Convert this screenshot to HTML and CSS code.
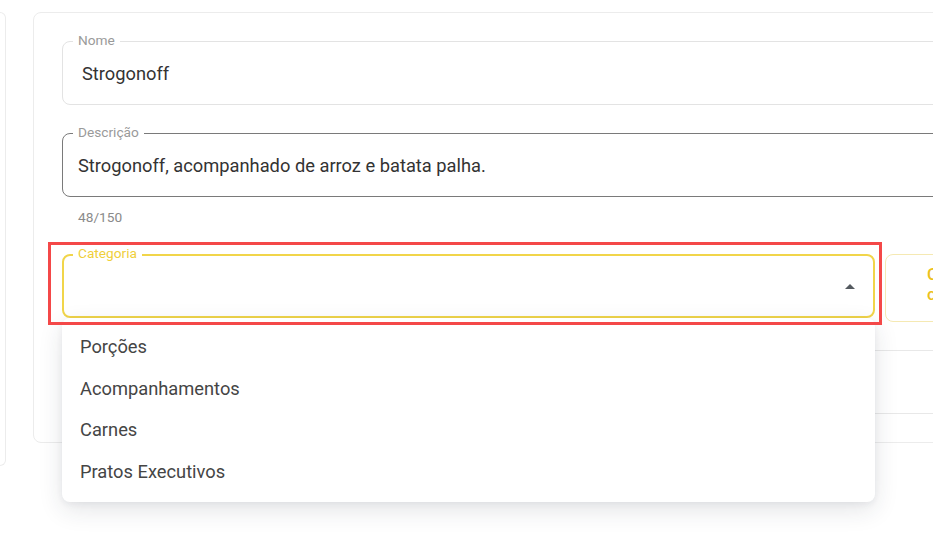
FILE: index.html
```html
<!DOCTYPE html>
<html lang="pt-BR">
<head>
<meta charset="utf-8">
<title>Produto</title>
<link rel="stylesheet" href="styles.css">
</head>
<body>
<div class="page">
  <aside class="side"></aside>
  <main class="card">
    <div class="field field-name">
      <span class="label">Nome</span>
      <span class="value">Strogonoff</span>
    </div>
    <div class="field field-desc">
      <span class="label">Descrição</span>
      <span class="value">Strogonoff, acompanhado de arroz e batata palha.</span>
    </div>
    <div class="counter">48/150</div>
    <div class="cat-row">
      <div class="select">
        <span class="label label-cat">Categoria</span>
        <span class="arrow"></span>
        <div class="highlight"></div>
        <ul class="menu">
          <li>Porções</li>
          <li>Acompanhamentos</li>
          <li>Carnes</li>
          <li>Pratos Executivos</li>
        </ul>
      </div>
      <button class="add-btn">Criar categoria</button>
    </div>
    <div class="field field-price"></div>
  </main>
</div>
</body>
</html>
```

FILE: styles.css
```css
* { box-sizing: border-box; }
html, body {
  margin: 0;
  width: 933px;
  height: 544px;
  overflow: hidden;
  background: #ffffff;
  font-family: Roboto, "Noto Sans", sans-serif;
}
.page {
  display: flex;
  align-items: flex-start;
  gap: 27px;
  padding-top: 12px;
}
.side {
  flex: none;
  width: 6px;
  height: 454px;
  border: 1px solid #ececec;
  border-left: none;
  border-radius: 0 8px 8px 0;
}
.card {
  flex: none;
  width: 1000px;
  border: 1px solid #ececec;
  border-radius: 8px;
  padding: 28px 28px 28px 28px;
  display: flex;
  flex-direction: column;
}
.field {
  position: relative;
  height: 64px;
  border: 1px solid #e3e3e3;
  border-radius: 8px;
  display: flex;
  align-items: center;
}
.label {
  position: absolute;
  top: -11px;
  left: 10px;
  padding: 0 5px;
  background: #fff;
  font-size: 13.7px;
  line-height: 18px;
  color: #9a9a9a;
}
.value {
  font-size: 18.3px;
  color: #333;
}
.field-name .value { padding-left: 19px; }
.field-desc {
  margin-top: 28px;
  border-color: #7a7a7a;
}
.field-desc .value { padding-left: 15px; }
.counter {
  margin-top: 11px;
  padding-left: 16px;
  font-size: 13.7px;
  line-height: 18px;
  color: #8a8a8a;
}
.cat-row {
  margin-top: 28px;
  display: flex;
  align-items: flex-start;
  gap: 10px;
}
.select {
  position: relative;
  flex: none;
  width: 813px;
  height: 64px;
  border: 2px solid #f1d54a;
  border-radius: 8px;
  z-index: 2;
}
.label-cat {
  top: -12px;
  left: 9px;
  color: #efcf3a;
}
.arrow {
  position: absolute;
  top: 28px;
  right: 18px;
  width: 0;
  height: 0;
  border-left: 5px solid transparent;
  border-right: 5px solid transparent;
  border-bottom: 5px solid #555a60;
}
.highlight {
  position: absolute;
  left: -16px;
  top: -14px;
  width: 834px;
  height: 83px;
  border: 3px solid #f44848;
  z-index: 3;
}
.menu {
  position: absolute;
  top: calc(100% + 2px);
  left: -2px;
  width: 813px;
  margin: 0;
  padding: 8px 0 10px;
  list-style: none;
  background: #fff;
  border-radius: 8px;
  box-shadow: 0 8px 24px rgba(30, 40, 60, 0.12), 0 2px 6px rgba(30, 40, 60, 0.06);
}
.menu li {
  padding: 10px 18px;
  font-size: 18.3px;
  line-height: 21.6px;
  color: #454545;
}
.add-btn {
  flex: none;
  width: 140px;
  height: 68px;
  margin-top: 0;
  border: 1px solid #f5e9b3;
  border-radius: 8px;
  background: #fff;
  padding: 9px 50px 0 41px;
  text-align: left;
  font-family: inherit;
  font-size: 17px;
  font-weight: 500;
  line-height: 20px;
  color: #ecc11c;
  display: flex;
  align-items: flex-start;
}
.field-price {
  margin-top: 28px;
  border-color: #e8e8e8;
}
```
